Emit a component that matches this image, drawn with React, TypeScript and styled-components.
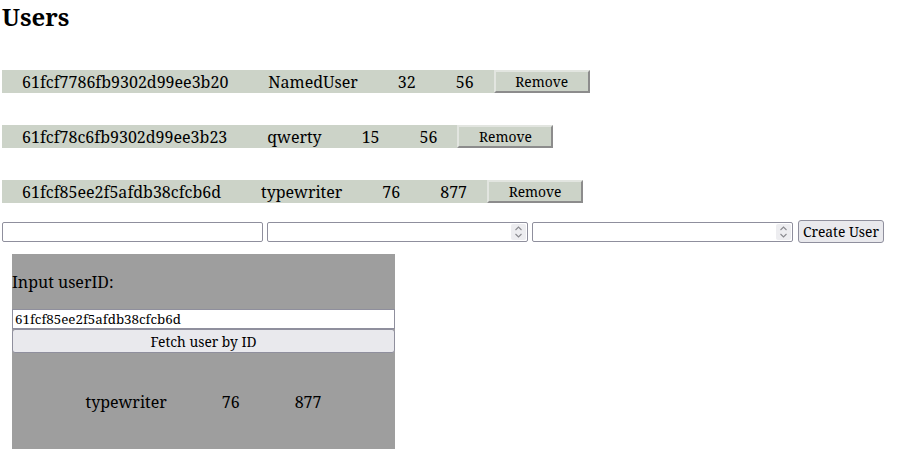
import React from 'react';
import styled, { createGlobalStyle } from 'styled-components';

const GlobalStyle = createGlobalStyle`
  body {
    margin: 0;
    background: #ffffff;
    color: #000000;
    font-family: 'Noto Serif', 'DejaVu Serif', serif;
  }
`;

const Page = styled.div`
  display: flex;
  flex-direction: column;
  align-items: flex-start;
  padding: 0 2px;
`;

const Title = styled.h2`
  margin: 0 0 37px;
  font-size: 24px;
  font-weight: bold;
`;

const UserList = styled.div`
  display: flex;
  flex-direction: column;
  align-items: flex-start;
  gap: 32px;
`;

const UserRow = styled.div`
  display: flex;
  align-items: center;
  height: 23px;
  background: #ccd3c8;
  font-size: 16px;
`;

const Cell = styled.span`
  padding: 0 20px;
  line-height: 24px;
`;

const RemoveButton = styled.button`
  box-sizing: border-box;
  width: 96px;
  height: 23px;
  padding: 0;
  background: #ccd3c8;
  border: 2px solid #e2e5e0;
  border-right-color: #8c8c8c;
  border-bottom-color: #8c8c8c;
  font-family: inherit;
  font-size: 13.8px;
  color: #000;
`;

const CreateForm = styled.div`
  display: flex;
  align-items: center;
  gap: 4px;
  margin-top: 17px;
`;

const Field = styled.input`
  box-sizing: border-box;
  width: 261px;
  height: 20px;
  margin: 0;
  padding: 1px 2px;
  border: 1px solid #8f8f9d;
  border-radius: 2px;
  font-family: inherit;
  font-size: 13.33px;
  -moz-appearance: textfield;

  &::-webkit-inner-spin-button,
  &::-webkit-outer-spin-button {
    -webkit-appearance: none;
    margin: 0;
  }
`;

const NumberWrap = styled.div`
  position: relative;
  display: flex;
`;

const Spinner = styled.div`
  position: absolute;
  top: 2px;
  right: 2px;
  bottom: 2px;
  width: 15px;
  display: flex;
  align-items: center;
  justify-content: center;
  background: #ededf0;
  border-radius: 2px;
  pointer-events: none;
`;

const FormButton = styled.button`
  box-sizing: border-box;
  height: 23px;
  margin-left: 1px;
  padding: 0 4px;
  background: #e9e9ed;
  border: 1px solid #8f8f9d;
  border-radius: 3px;
  font-family: inherit;
  font-size: 13.8px;
  color: #000;
`;

const FetchPanel = styled.div`
  display: flex;
  flex-direction: column;
  width: 383px;
  height: 195px;
  margin: 11px 0 0 10px;
  background: #9e9e9e;
`;

const PanelLabel = styled.div`
  margin-top: 16px;
  font-size: 16px;
  line-height: 24px;
  height: 39px;
`;

const IdField = styled(Field)`
  width: 100%;
  border-radius: 0;
  padding: 1px 2px;
`;

const FetchButton = styled(FormButton)`
  width: 100%;
  height: 24px;
  margin: 0;
`;

const Result = styled.div`
  display: flex;
  justify-content: center;
  gap: 55px;
  margin-top: 38px;
  font-size: 16px;
  line-height: 22px;
`;

const SpinIcon = () => (
  <svg width="9" height="14" viewBox="0 0 9 14" fill="none" stroke="#8a8a8f" strokeWidth="1.1">
    <path d="M1.5 5 L4.5 2 L7.5 5" />
    <path d="M1.5 9 L4.5 12 L7.5 9" />
  </svg>
);

const NumberField = () => (
  <NumberWrap>
    <Field type="number" />
    <Spinner>
      <SpinIcon />
    </Spinner>
  </NumberWrap>
);

const users = [
  { id: '61fcf7786fb9302d99ee3b20', name: 'NamedUser', a: 32, b: 56 },
  { id: '61fcf78c6fb9302d99ee3b23', name: 'qwerty', a: 15, b: 56 },
  { id: '61fcf85ee2f5afdb38cfcb6d', name: 'typewriter', a: 76, b: 877 },
];

const App = (): JSX.Element => (
  <>
    <GlobalStyle />
    <Page>
      <Title>Users</Title>
      <UserList>
        {users.map((u) => (
          <UserRow key={u.id}>
            <Cell>{u.id}</Cell>
            <Cell>{u.name}</Cell>
            <Cell>{u.a}</Cell>
            <Cell>{u.b}</Cell>
            <RemoveButton>Remove</RemoveButton>
          </UserRow>
        ))}
      </UserList>
      <CreateForm>
        <Field type="text" />
        <NumberField />
        <NumberField />
        <FormButton>Create User</FormButton>
      </CreateForm>
      <FetchPanel>
        <PanelLabel>Input userID:</PanelLabel>
        <IdField type="text" defaultValue="61fcf85ee2f5afdb38cfcb6d" />
        <FetchButton>Fetch user by ID</FetchButton>
        <Result>
          <span>typewriter</span>
          <span>76</span>
          <span>877</span>
        </Result>
      </FetchPanel>
    </Page>
  </>
);

export default App;
